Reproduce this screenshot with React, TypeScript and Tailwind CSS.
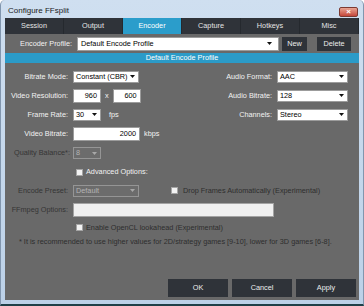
const tabs = ['Session', 'Output', 'Encoder', 'Capture', 'Hotkeys', 'Misc'];

function Arrow({ color = '#111' }: { color?: string }) {
  return (
    <svg width="5" height="3" viewBox="0 0 5 3" className="shrink-0">
      <path d="M0 0h5L2.5 3z" fill={color} />
    </svg>
  );
}

function Select({ value, w, disabled = false }: { value: string; w: string; disabled?: boolean }) {
  return (
    <div
      className={`flex h-[12px] items-center justify-between border pl-[2px] pr-[3px] ${w} ${
        disabled ? 'border-[#959595] bg-[#6c6c6c] text-[#b4b4b4]' : 'border-[#9c9c9c] bg-white text-black'
      }`}
    >
      <span className="whitespace-nowrap leading-none">{value}</span>
      <Arrow color={disabled ? '#a8a8a8' : '#111'} />
    </div>
  );
}

function Input({ value, w }: { value: string; w: string }) {
  return (
    <div className={`flex h-[14px] items-center justify-end border border-[#9c9c9c] bg-white pr-[3px] leading-none text-black ${w}`}>
      {value}
    </div>
  );
}

function Check() {
  return <div className="h-[7px] w-[7px] shrink-0 border border-[#a5a5a5] bg-[#f3f3f3]" />;
}

function Label({ children, w, dim = false }: { children: React.ReactNode; w: string; dim?: boolean }) {
  return <div className={`shrink-0 whitespace-nowrap text-right leading-none ${w} ${dim ? 'text-[#353535]' : 'text-[#f2f2f2]'}`}>{children}</div>;
}

export default function App() {
  return (
    <div className="flex h-[306px] w-[364px] flex-col overflow-hidden rounded-t-[5px] border-x border-b-2 border-x-[#8196ae] border-b-[#1f4048] bg-gradient-to-b from-[#cfdff0] to-[#bcd1e8] font-['Liberation_Sans',Arial,sans-serif] text-[7.3px]">
      {/* title bar */}
      <div className="flex h-[18px] shrink-0 items-start justify-between pl-[7px] pr-[5px]">
        <span className="pt-[7px] text-[8px] leading-none text-[#1b1b1b]">Configure FFsplit</span>
        <div className="mt-[7px] flex h-[10px] w-[19px] items-center justify-center rounded-[2px] border border-[#7c3a32] bg-gradient-to-b from-[#e8a493] to-[#c4453a] text-[8px] font-bold leading-none text-white">
          ×
        </div>
      </div>

      {/* content */}
      <div className="mx-[4px] flex flex-1 flex-col bg-[#696969]">
        <div className="grid h-[16px] shrink-0 grid-cols-6">
          {tabs.map((t) => (
            <div
              key={t}
              className={`flex items-center justify-center border-r border-[#25292e] leading-none ${
                t === 'Encoder' ? 'bg-[#2b9dcb] text-white' : 'bg-[#2f3339] text-[#e4e4e4]'
              }`}
            >
              {t}
            </div>
          ))}
        </div>

        {/* profile row */}
        <div className="flex h-[19px] shrink-0 items-center">
          <Label w="w-[67px]">Encoder Profile:</Label>
          <div className="ml-[5px] flex h-[14px] w-[202px] items-center justify-between border border-[#9c9c9c] bg-white pl-[3px] pr-[6px] leading-none text-black">
            Default Encode Profile
            <Arrow />
          </div>
          <div className="ml-[3px] flex h-[14px] w-[25px] items-center justify-center bg-[#2f3339] leading-none text-[#ececec]">New</div>
          <div className="ml-[10px] flex h-[14px] w-[34px] items-center justify-center bg-[#2f3339] leading-none text-[#ececec]">Delete</div>
        </div>

        <div className="flex h-[10px] shrink-0 items-center justify-center bg-[#2b9bc8] leading-none text-white">Default Encode Profile</div>

        {/* form */}
        <div className="mt-[4px] flex flex-col">
          <div className="flex h-[19px] items-center">
            <div className="flex w-[180px] items-center">
              <Label w="w-[63px]">Bitrate Mode:</Label>
              <div className="ml-[5px]"><Select value="Constant (CBR)" w="w-[66px]" /></div>
            </div>
            <Label w="w-[87px]">Audio Format:</Label>
            <div className="ml-[5px]"><Select value="AAC" w="w-[71px]" /></div>
          </div>

          <div className="flex h-[19px] items-center">
            <div className="flex w-[180px] items-center">
              <Label w="w-[63px]">Video Resolution:</Label>
              <div className="ml-[5px] flex items-center">
                <Input value="960" w="w-[28px]" />
                <span className="mx-[4px] leading-none text-[#f2f2f2]">x</span>
                <Input value="600" w="w-[28px]" />
              </div>
            </div>
            <Label w="w-[87px]">Audio Bitrate:</Label>
            <div className="ml-[5px]"><Select value="128" w="w-[71px]" /></div>
          </div>

          <div className="flex h-[19px] items-center">
            <div className="flex w-[180px] items-center">
              <Label w="w-[63px]">Frame Rate:</Label>
              <div className="ml-[5px] flex items-center">
                <Select value="30" w="w-[28px]" />
                <span className="ml-[8px] leading-none text-[#f2f2f2]">fps</span>
              </div>
            </div>
            <Label w="w-[87px]">Channels:</Label>
            <div className="ml-[5px]"><Select value="Stereo" w="w-[71px]" /></div>
          </div>

          <div className="flex h-[19px] items-center">
            <Label w="w-[63px]">Video Bitrate:</Label>
            <div className="ml-[5px] flex items-center">
              <Input value="2000" w="w-[67px]" />
              <span className="ml-[4px] leading-none text-[#f2f2f2]">kbps</span>
            </div>
          </div>

          <div className="flex h-[20px] items-center">
            <Label w="w-[65px]" dim>Quality Balance*:</Label>
            <div className="ml-[3px]"><Select value="8" w="w-[28px]" disabled /></div>
          </div>

          <div className="flex h-[18px] items-center pl-[71px]">
            <Check />
            <span className="ml-[3px] leading-none text-[#f2f2f2]">Advanced Options:</span>
          </div>

          <div className="flex h-[19px] items-center">
            <Label w="w-[63px]" dim>Encode Preset:</Label>
            <div className="ml-[5px]"><Select value="Default" w="w-[66px]" disabled /></div>
            <div className="ml-[32px] flex items-center">
              <Check />
              <span className="ml-[5px] leading-none text-[#2e2e2e]">Drop Frames Automatically (Experimental)</span>
            </div>
          </div>

          <div className="flex h-[19px] items-center">
            <Label w="w-[63px]" dim>FFmpeg Options:</Label>
            <div className="ml-[5px] h-[14px] w-[201px] border border-[#a3a3a3] bg-[#f0f0f0]" />
          </div>

          <div className="flex h-[17px] items-center pl-[71px]">
            <Check />
            <span className="ml-[3px] leading-none text-[#2e2e2e]">Enable OpenCL lookahead (Experimental)</span>
          </div>

          <div className="flex h-[12px] items-center whitespace-nowrap pl-[14px] leading-none text-[#2e2e2e]">
            * It is recommended to use higher values for 2D/strategy games [9-10], lower for 3D games [6-8].
          </div>
        </div>

        {/* bottom buttons */}
        <div className="mt-auto flex justify-end gap-[4px] pb-[3px] pr-[3px]">
          {['OK', 'Cancel', 'Apply'].map((b) => (
            <div key={b} className="flex h-[18px] w-[60px] items-center justify-center bg-[#2f3339] leading-none text-[#ececec]">
              {b}
            </div>
          ))}
        </div>
      </div>
      <div className="h-[4px] shrink-0" />
    </div>
  );
}
